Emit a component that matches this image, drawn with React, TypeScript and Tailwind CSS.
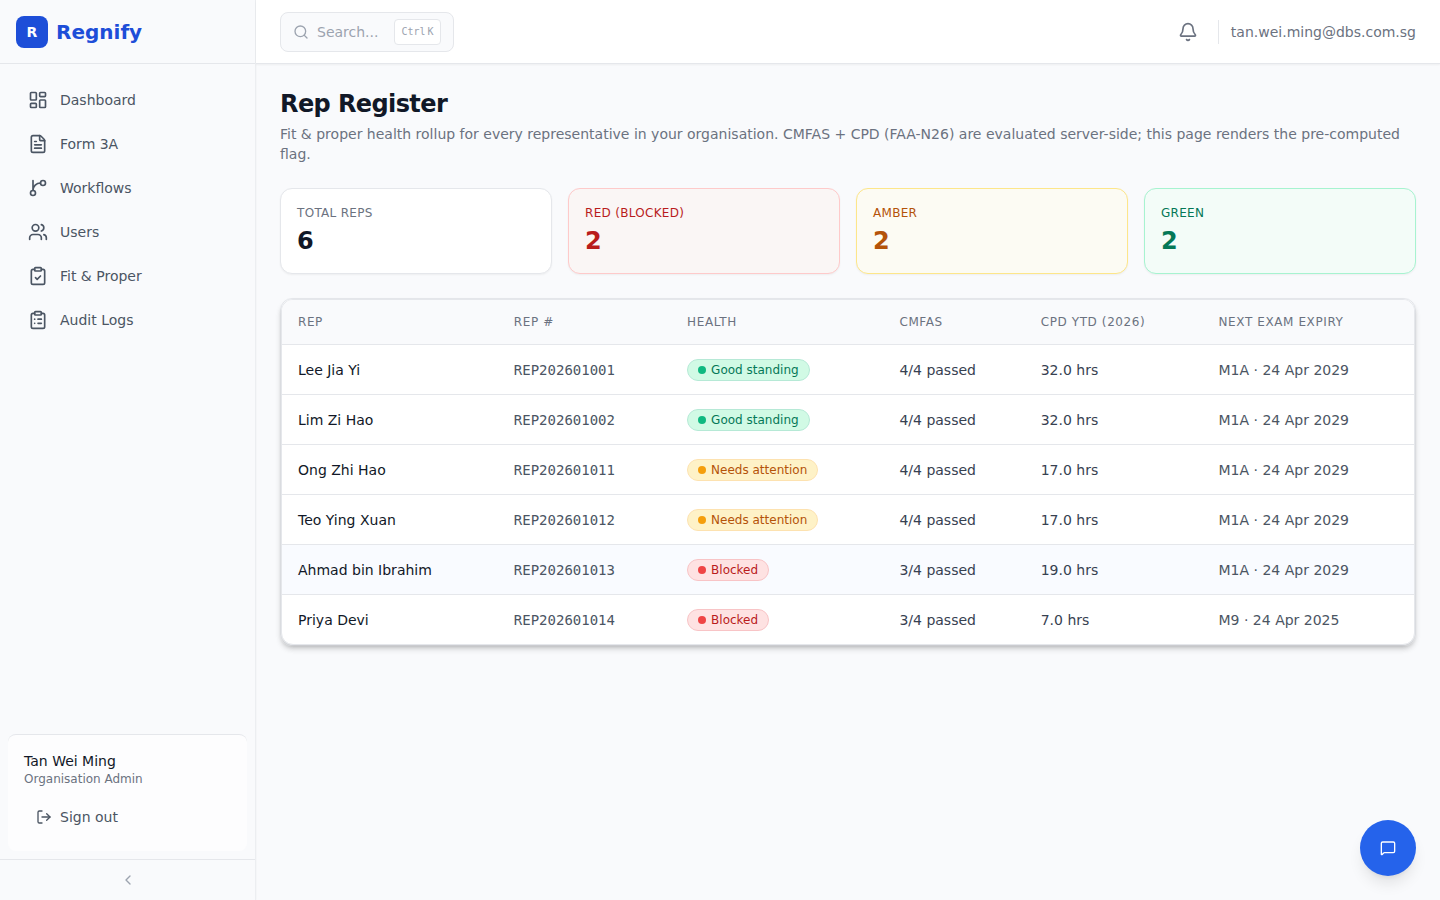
import {
  Bell,
  ChevronLeft,
  ClipboardCheck,
  ClipboardList,
  FileText,
  LayoutDashboard,
  LogOut,
  MessageSquare,
  Search,
  Users,
} from "lucide-react";
import clsx from "clsx";
import type { ComponentType } from "react";

type Health = "green" | "amber" | "red";

interface Rep {
  name: string;
  number: string;
  health: Health;
  cmfas: string;
  cpd: string;
  expiry: string;
}

function BranchIcon({ className }: { className?: string }) {
  return (
    <svg
      viewBox="0 0 24 24"
      fill="none"
      stroke="currentColor"
      strokeWidth={2}
      strokeLinecap="round"
      strokeLinejoin="round"
      aria-hidden="true"
      className={className}
    >
      <path d="M15 6a9 9 0 0 0-9 9V3" />
      <circle cx="18" cy="6" r="3" />
      <circle cx="6" cy="18" r="3" />
    </svg>
  );
}

const NAV: { label: string; icon: ComponentType<{ className?: string }> }[] = [
  { label: "Dashboard", icon: LayoutDashboard },
  { label: "Form 3A", icon: FileText },
  { label: "Workflows", icon: BranchIcon },
  { label: "Users", icon: Users },
  { label: "Fit & Proper", icon: ClipboardCheck },
  { label: "Audit Logs", icon: ClipboardList },
];

const STATS = [
  { label: "Total reps", value: 6, card: "bg-white border-[#e5e7eb]", text: "text-[#6b7280]", num: "text-[#111827]" },
  { label: "Red (blocked)", value: 2, card: "bg-[#faf6f5] border-[#fecaca]", text: "text-[#b91c1c]", num: "text-[#b91c1c]" },
  { label: "Amber", value: 2, card: "bg-[#fcfbf3] border-[#fde68a]", text: "text-[#b45309]", num: "text-[#b45309]" },
  { label: "Green", value: 2, card: "bg-[#f3fcf8] border-[#a7f3d0]", text: "text-[#047857]", num: "text-[#047857]" },
];

const HEALTH: Record<Health, { label: string; pill: string; dot: string }> = {
  green: {
    label: "Good standing",
    pill: "bg-[#d1fae5] border-[#b6e9d6] text-[#047857]",
    dot: "bg-[#10b981]",
  },
  amber: {
    label: "Needs attention",
    pill: "bg-[#fef2c7] border-[#fde2b0] text-[#b45309]",
    dot: "bg-[#f59e0b]",
  },
  red: {
    label: "Blocked",
    pill: "bg-[#fee2e2] border-[#f8c4c6] text-[#b91c1c]",
    dot: "bg-[#ef4444]",
  },
};

const COLUMNS = ["Rep", "Rep #", "Health", "CMFAS", "CPD YTD (2026)", "Next exam expiry"];

const REPS: Rep[] = [
  { name: "Lee Jia Yi", number: "REP202601001", health: "green", cmfas: "4/4 passed", cpd: "32.0 hrs", expiry: "M1A · 24 Apr 2029" },
  { name: "Lim Zi Hao", number: "REP202601002", health: "green", cmfas: "4/4 passed", cpd: "32.0 hrs", expiry: "M1A · 24 Apr 2029" },
  { name: "Ong Zhi Hao", number: "REP202601011", health: "amber", cmfas: "4/4 passed", cpd: "17.0 hrs", expiry: "M1A · 24 Apr 2029" },
  { name: "Teo Ying Xuan", number: "REP202601012", health: "amber", cmfas: "4/4 passed", cpd: "17.0 hrs", expiry: "M1A · 24 Apr 2029" },
  { name: "Ahmad bin Ibrahim", number: "REP202601013", health: "red", cmfas: "3/4 passed", cpd: "19.0 hrs", expiry: "M1A · 24 Apr 2029" },
  { name: "Priya Devi", number: "REP202601014", health: "red", cmfas: "3/4 passed", cpd: "7.0 hrs", expiry: "M9 · 24 Apr 2025" },
];

function Sidebar() {
  return (
    <aside className="flex w-64 shrink-0 flex-col border-r border-[#eceef1] bg-[#f9fafc] shadow-xs">
      <div className="flex h-16 items-center gap-2 border-b border-[#e5e7eb] px-4">
        <span className="flex size-8 items-center justify-center rounded-lg bg-[#1d4ed8] text-sm font-bold text-white">
          R
        </span>
        <span className="text-xl font-bold text-[#1d4ed8]">Regnify</span>
      </div>

      <nav className="flex flex-1 flex-col gap-1 p-4">
        {NAV.map(({ label, icon: Icon }) => (
          <a
            key={label}
            href="#"
            className="flex h-10 items-center gap-3 rounded-lg px-3 text-sm font-medium text-[#4b5563] hover:bg-gray-100"
          >
            <Icon className="size-5 shrink-0" />
            {label}
          </a>
        ))}
      </nav>

      {/* Signed-in user */}
      <div className="mx-2 mb-2 rounded-lg border-t border-[#e5e7eb] bg-[#fdfdfe] p-4">
        <p className="text-sm font-medium text-[#111827]">Tan Wei Ming</p>
        <p className="text-xs text-[#6b7280]">Organisation Admin</p>
        <button
          type="button"
          className="mt-3 flex w-full items-center gap-2 rounded-lg px-3 py-2 text-sm font-medium text-[#4b5563] hover:bg-gray-100"
        >
          <LogOut className="size-4" />
          Sign out
        </button>
      </div>

      <button
        type="button"
        aria-label="Collapse sidebar"
        className="flex items-center justify-center border-t border-[#e5e7eb] py-3 text-[#9ca3af]"
      >
        <ChevronLeft className="size-4" />
      </button>
    </aside>
  );
}

function Topbar() {
  return (
    <header className="flex h-16 shrink-0 items-center justify-between border-b border-[#e5e7eb] bg-white px-6 shadow-xs">
      <button
        type="button"
        className="flex h-10 items-center gap-2 rounded-lg border border-[#e5e7eb] bg-[#f9fafc] px-3 text-sm text-[#9ca3af]"
      >
        <Search className="size-4" />
        <span>Search...</span>
        <kbd className="ml-2 flex h-[26px] items-center gap-0.5 rounded border border-[#e5e7eb] bg-white px-1.5 pt-0.5 font-['DejaVu_Sans_Mono',monospace] text-[10px]">
          <span>Ctrl</span>
          <span>K</span>
        </kbd>
      </button>

      <div className="flex items-center gap-3">
        <button type="button" aria-label="Notifications" className="rounded-lg p-2 text-[#6b7280]">
          <Bell className="size-5" />
        </button>
        <div className="flex h-6 items-center border-l border-[#e5e7eb] pl-3 text-sm text-[#6b7280]">
          tan.wei.ming@dbs.com.sg
        </div>
      </div>
    </header>
  );
}

function HealthPill({ health }: { health: Health }) {
  const h = HEALTH[health];
  return (
    <span
      className={clsx(
        "inline-flex h-[22px] items-center gap-[5px] rounded-full border px-2.5 align-middle text-xs font-medium",
        h.pill,
      )}
    >
      <span className={clsx("size-2 rounded-full", h.dot)} />
      {h.label}
    </span>
  );
}

function RepTable() {
  return (
    <div className="mt-6 rounded-xl border border-[#e5e7eb] shadow-md">
      <div className="overflow-hidden rounded-xl border border-[#e5e7eb] bg-white shadow-md">
        <table className="w-full text-left text-sm">
          <thead className="bg-[#f9fafc]">
            <tr className="h-11 border-b border-[#e5e7eb]">
              {COLUMNS.map((c) => (
                <th
                  key={c}
                  scope="col"
                  className="px-4 text-xs font-medium tracking-wider text-[#6b7280] uppercase"
                >
                  {c}
                </th>
              ))}
            </tr>
          </thead>
          <tbody>
            {REPS.map((r) => (
              <tr
                key={r.number}
                className="h-[50px] border-b border-[#e5e7eb] last:border-b-0 nth-5:bg-[#f9fbff]"
              >
                <td className="px-4 pt-0.5 font-medium text-[#111827]">{r.name}</td>
                <td className="px-4 pt-0.5 font-['DejaVu_Sans_Mono',monospace] text-[#4b5563]">{r.number}</td>
                <td className="px-4 pt-0.5">
                  <HealthPill health={r.health} />
                </td>
                <td className="px-4 pt-0.5 text-[#374151]">{r.cmfas}</td>
                <td className="px-4 pt-0.5 text-[#374151]">{r.cpd}</td>
                <td className="px-4 pt-0.5 text-[#4b5563]">{r.expiry}</td>
              </tr>
            ))}
          </tbody>
        </table>
      </div>
    </div>
  );
}

export default function App() {
  return (
    <div className="flex min-h-screen bg-[#f9fafc] font-['DejaVu_Sans',sans-serif]">
      <Sidebar />
      <div className="flex min-w-0 flex-1 flex-col">
        <Topbar />
        <main className="flex-1 p-6">
          <h1 className="text-2xl font-bold tracking-tight text-[#111827]">Rep Register</h1>
          <p className="mt-1 text-sm text-[#6b7280]">
            Fit &amp; proper health rollup for every representative in your organisation. CMFAS + CPD
            (FAA-N26) are evaluated server-side; this page renders the pre-computed flag.
          </p>

          <div className="mt-6 grid grid-cols-4 gap-4">
            {STATS.map((s) => (
              <div key={s.label} className={clsx("rounded-xl border p-4 shadow-xs", s.card)}>
                <p className={clsx("text-xs tracking-wide uppercase", s.text)}>{s.label}</p>
                <p className={clsx("mt-1 text-2xl font-bold", s.num)}>{s.value}</p>
              </div>
            ))}
          </div>

          <RepTable />
        </main>
      </div>

      {/* Floating chat launcher */}
      <button
        type="button"
        aria-label="Open chat"
        className="fixed right-6 bottom-6 flex size-14 items-center justify-center rounded-full bg-[#2563eb] text-white shadow-lg"
      >
        <MessageSquare className="size-4" />
      </button>
    </div>
  );
}
